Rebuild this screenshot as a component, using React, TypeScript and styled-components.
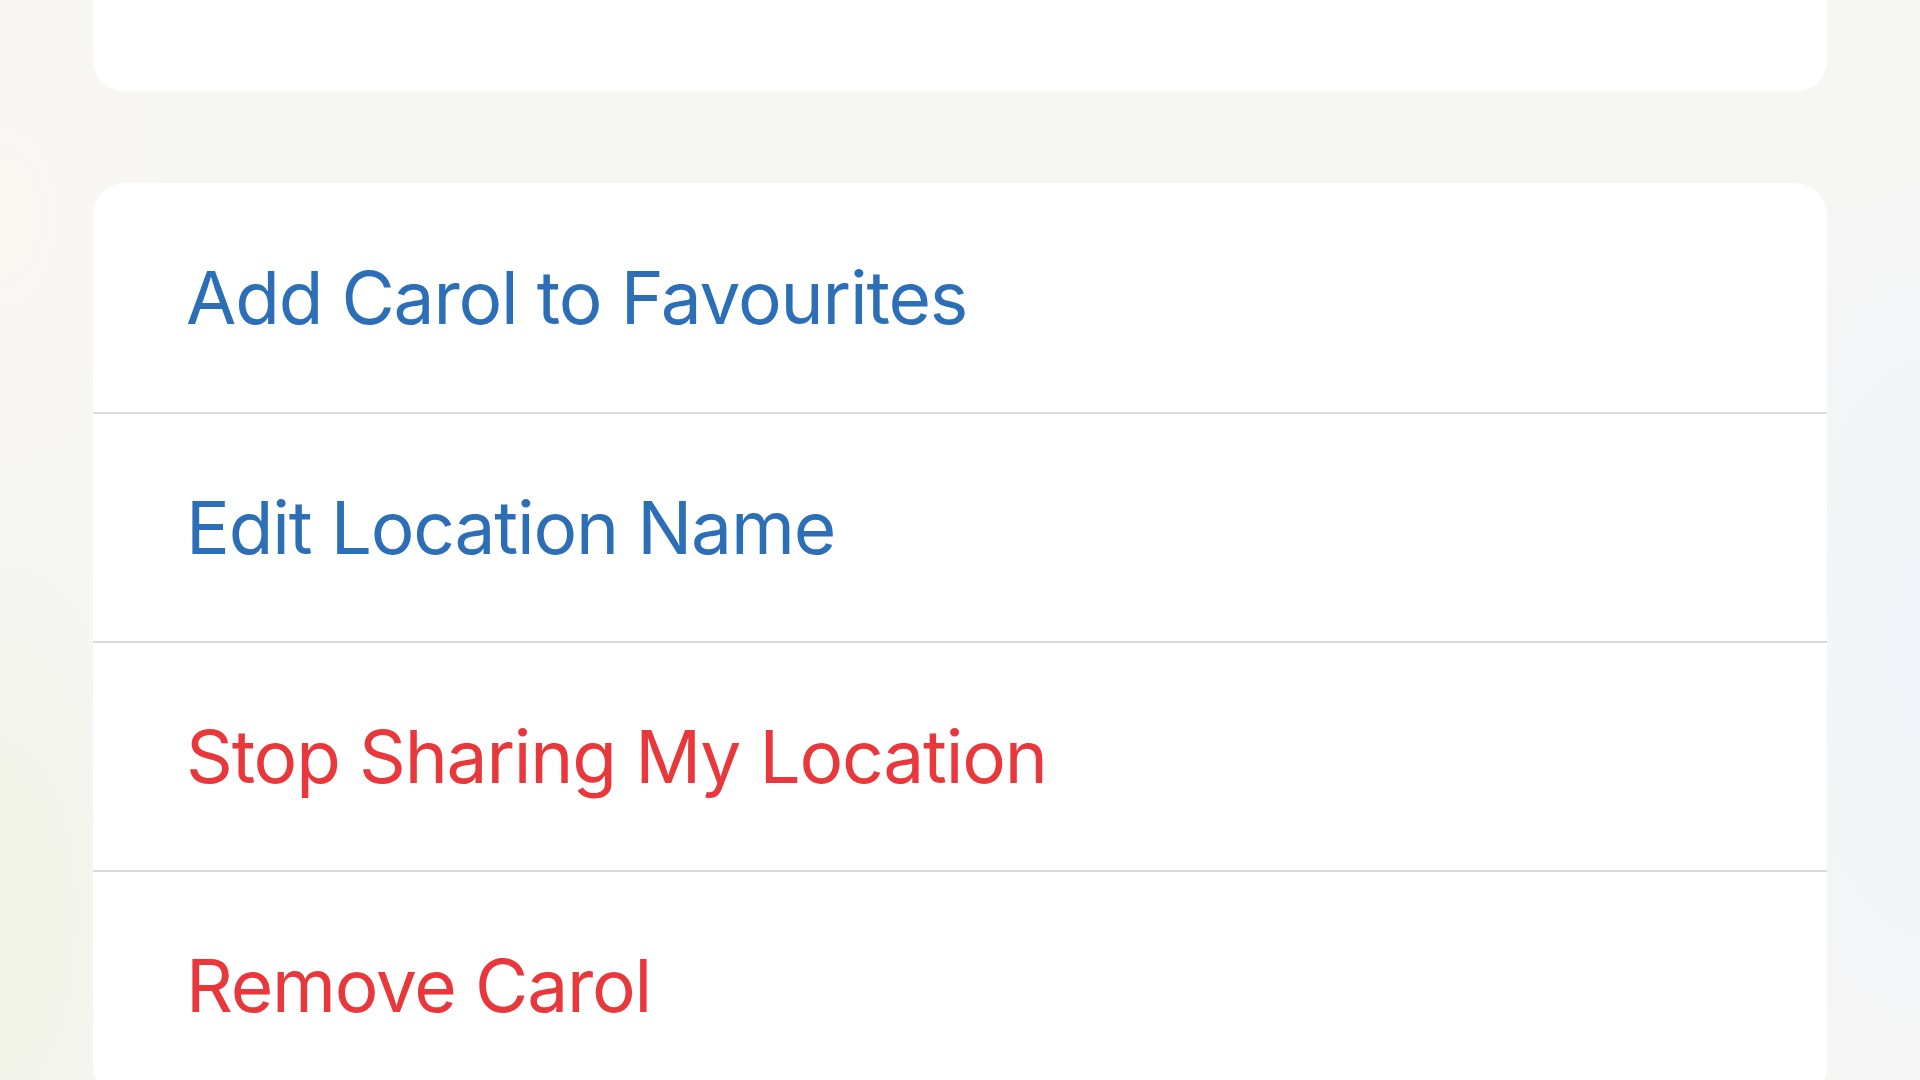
import styled, { createGlobalStyle } from "styled-components";

const GlobalStyle = createGlobalStyle`
  html, body {
    margin: 0;
    padding: 0;
  }
  body {
    font-family: Inter, "Noto Sans", "Liberation Sans", sans-serif;
  }
`

const Page = styled.div`
  width: 1920px;
  height: 1080px;
  overflow: hidden;
  box-sizing: border-box;
  padding: 0 93px;
  display: flex;
  flex-direction: column;
  gap: 92px;
  background:
    radial-gradient(ellipse 260px 600px at 0% 85%, rgba(240, 244, 226, 0.8), transparent 70%),
    radial-gradient(ellipse 300px 700px at 100% 60%, rgba(241, 244, 250, 0.9), transparent 70%),
    radial-gradient(ellipse 250px 400px at 0% 20%, rgba(252, 248, 242, 0.8), transparent 70%),
    #f6f6f5;
`

const TopCard = styled.div`
  flex: 0 0 91px;
  background: #ffffff;
  border-radius: 0 0 30px 30px;
`

const ActionCard = styled.div`
  flex: 0 0 auto;
  background: #ffffff;
  border-radius: 32px;
  display: flex;
  flex-direction: column;
  overflow: hidden;
`

const Row = styled.div`
  height: 229px;
  box-sizing: border-box;
  display: flex;
  align-items: center;
  padding-left: 93px;
  & + & {
    border-top: 2px solid #dadada;
  }
`

const Label = styled.span<{ $danger?: boolean }>`
  font-size: 73px;
  font-weight: 400;
  letter-spacing: -1.2px;
  color: ${p => (p.$danger ? "#e8383b" : "#2c6fb6")};
  line-height: 1;
`

const actions = [
  { label: "Add Carol to Favourites" },
  { label: "Edit Location Name" },
  { label: "Stop Sharing My Location", danger: true },
  { label: "Remove Carol", danger: true },
]

const App = () => {
  return (
    <>
      <GlobalStyle />
      <Page>
        <TopCard />
        <ActionCard>
          {actions.map(a => (
            <Row key={a.label}>
              <Label $danger={a.danger}>{a.label}</Label>
            </Row>
          ))}
        </ActionCard>
      </Page>
    </>
  )
}

export default App;
